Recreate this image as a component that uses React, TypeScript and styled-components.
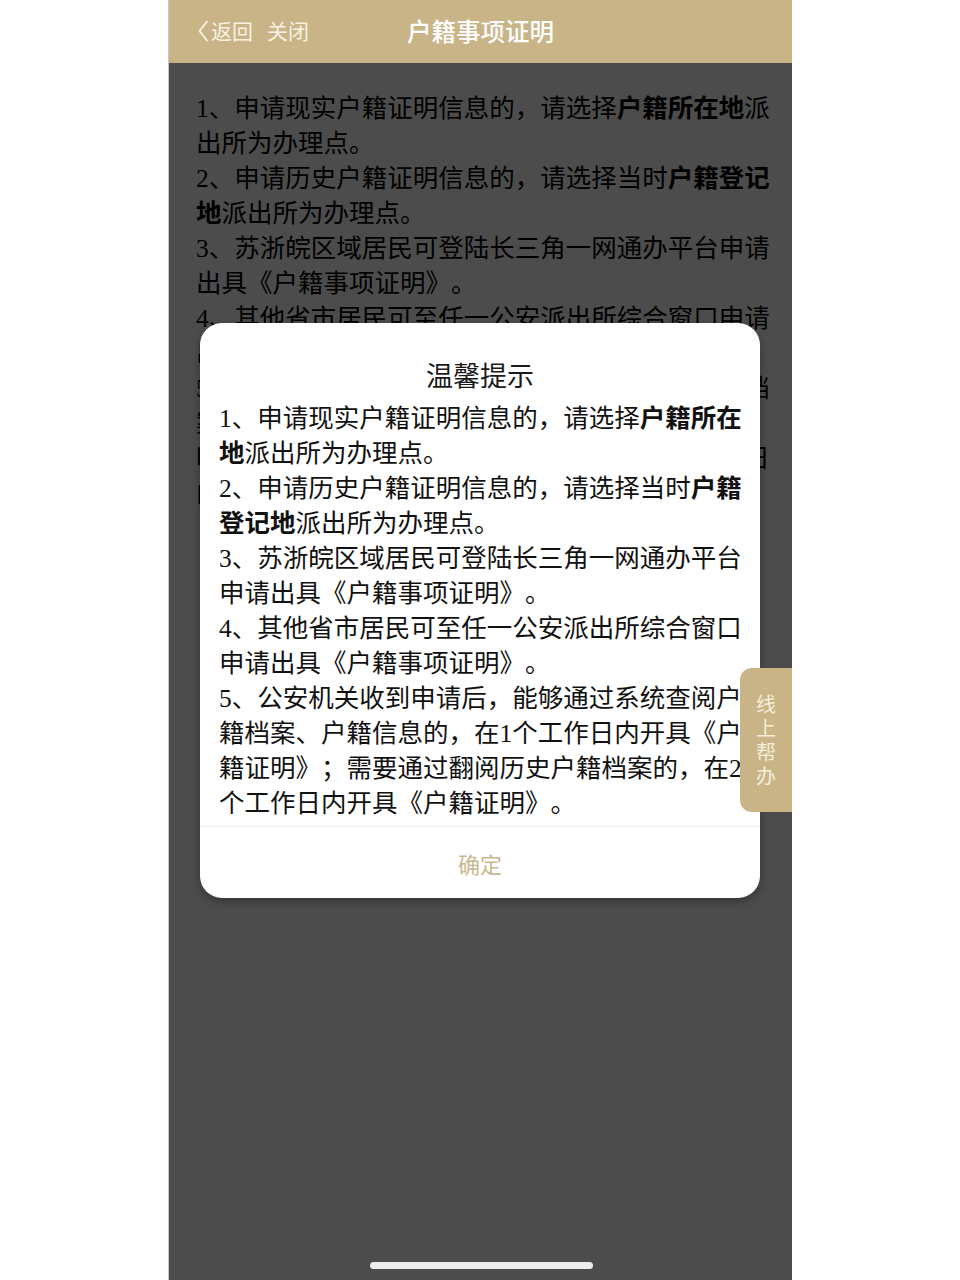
import * as React from "react";
import styled, { createGlobalStyle } from "styled-components";

const GlobalStyle = createGlobalStyle`
  html, body {
    margin: 0;
    padding: 0;
    background: #ffffff;
  }
  * {
    box-sizing: border-box;
  }
`;

const Phone = styled.div`
  position: relative;
  width: 624px;
  height: 1280px;
  margin: 0 auto;
  display: flex;
  flex-direction: column;
  background: #ffffff;
  border-left: 1px solid #c8c8c8;
  overflow: hidden;
`;

const NavBar = styled.div`
  height: 63px;
  flex: none;
  display: flex;
  align-items: center;
  position: relative;
  background: #c8b487;
  padding: 0 0 2px 28px;
  font-family: "Noto Sans CJK SC", "Noto Sans", sans-serif;
`;

const NavLink = styled.span<{ $gap?: number }>`
  display: flex;
  align-items: center;
  color: #f8f1e2;
  font-size: 21px;
  margin-right: ${(p) => p.$gap ?? 0}px;
  line-height: 1;
`;

const NavTitle = styled.div`
  position: absolute;
  left: 0;
  right: 0;
  top: 0;
  bottom: 2px;
  display: flex;
  align-items: center;
  justify-content: center;
  color: #ffffff;
  font-size: 24.5px;
  font-weight: 500;
  pointer-events: none;
`;

const Body = styled.div`
  position: relative;
  flex: 1;
`;

const Article = styled.div`
  padding: 25px 18px 0 27px;
  font-family: "Noto Sans CJK SC", sans-serif;
  font-size: 25.5px;
  line-height: 35px;
  color: #000000;
  text-spacing-trim: space-all;
`;

const Para = styled.p`
  margin: 0;
`;

const Strong = styled.b`
  font-weight: 700;
`;

/* serif digits, with a line-height small enough not to grow the line */
const Num = styled.span`
  font-family: "Liberation Serif", serif;
  line-height: 28px;
`;

const Overlay = styled.div`
  position: absolute;
  inset: 0;
  background: rgba(0, 0, 0, 0.7);
`;

const Dialog = styled.div`
  position: absolute;
  left: 31px;
  top: 260px;
  width: 560px;
  background: #ffffff;
  border-radius: 22px;
  box-shadow: 0 4px 10px rgba(0, 0, 0, 0.3);
  display: flex;
  flex-direction: column;
  overflow: hidden;
`;

const DialogTitle = styled.div`
  padding-top: 34px;
  margin-bottom: 6px;
  text-align: center;
  font-family: "Noto Sans CJK SC", sans-serif;
  font-size: 27px;
  line-height: 35px;
  color: #1a1a1a;
`;

const DialogText = styled.div`
  padding: 0 16px 8px 19px;
  font-family: "Noto Sans CJK SC", sans-serif;
  font-size: 25.5px;
  line-height: 35px;
  color: #111111;
  border-bottom: 1px solid #efefef;
  text-spacing-trim: space-all;
`;

const ConfirmButton = styled.div`
  height: 71px;
  display: flex;
  align-items: center;
  justify-content: center;
  font-family: "Noto Sans CJK SC", sans-serif;
  font-size: 22px;
  color: #c9b78f;
  cursor: pointer;
`;

const SideTab = styled.div`
  position: absolute;
  right: 0;
  top: 605px;
  width: 52px;
  height: 144px;
  background: #c8b487;
  border-radius: 12px 0 0 12px;
  display: flex;
  align-items: center;
  justify-content: center;
`;

const SideTabText = styled.div`
  width: 22px;
  font-family: "Noto Sans CJK SC", sans-serif;
  font-size: 20px;
  line-height: 24px;
  color: #f6eedb;
  text-align: center;
`;

const HomeIndicator = styled.div`
  position: absolute;
  left: 50%;
  bottom: 11px;
  width: 223px;
  height: 7px;
  margin-left: -111px;
  border-radius: 4px;
  background: #ececec;
`;

const Chevron = () => (
  <svg width="13" height="22" viewBox="0 0 13 22" style={{ marginRight: 1 }}>
    <path
      d="M10 1.5 L2.5 11 L10 20.5"
      fill="none"
      stroke="#f8f1e2"
      strokeWidth="2"
      strokeLinecap="round"
      strokeLinejoin="round"
    />
  </svg>
);

const notes = (
  <>
    <Para>
      <Num>1</Num>、申请现实户籍证明信息的，请选择<Strong>户籍所在地</Strong>派出所为办理点。
    </Para>
    <Para>
      <Num>2</Num>、申请历史户籍证明信息的，请选择当时<Strong>户籍登记地</Strong>派出所为办理点。
    </Para>
    <Para>
      <Num>3</Num>、苏浙皖区域居民可登陆长三角一网通办平台申请出具《户籍事项证明》。
    </Para>
    <Para>
      <Num>4</Num>、其他省市居民可至任一公安派出所综合窗口申请出具《户籍事项证明》。
    </Para>
    <Para>
      <Num>5</Num>、公安机关收到申请后，能够通过系统查阅户籍档案、户籍信息的，在<Num>1</Num>
      个工作日内开具《户籍证明》；需要通过翻阅历史户籍档案的，在<Num>2</Num>个工作日内开具《户籍证明》。
    </Para>
  </>
);

export default function App() {
  return (
    <>
      <GlobalStyle />
      <Phone>
        <NavBar>
          <NavLink $gap={14}>
            <Chevron />
            返回
          </NavLink>
          <NavLink>关闭</NavLink>
          <NavTitle>户籍事项证明</NavTitle>
        </NavBar>
        <Body>
          <Article>{notes}</Article>
          <Overlay />
          <Dialog>
            <DialogTitle>温馨提示</DialogTitle>
            <DialogText>{notes}</DialogText>
            <ConfirmButton>确定</ConfirmButton>
          </Dialog>
          <SideTab>
            <SideTabText>线上帮办</SideTabText>
          </SideTab>
          <HomeIndicator />
        </Body>
      </Phone>
    </>
  );
}
